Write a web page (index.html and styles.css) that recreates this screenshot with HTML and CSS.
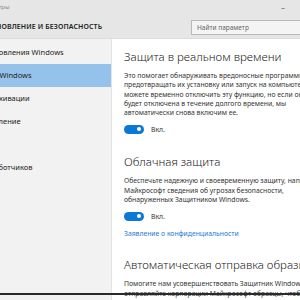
FILE: index.html
```html
<!DOCTYPE html>
<html lang="ru">
<head>
  <meta charset="UTF-8" />
  <title>Параметры</title>
  <link rel="stylesheet" href="styles.css">
</head>
<body>
  <div class="window">
    <div class="titlebar">
      <span class="app-name">Параметры</span>
      <span class="min-btn">&ndash;</span>
    </div>

    <div class="header">
      <div class="page-title">ОБНОВЛЕНИЕ И БЕЗОПАСНОСТЬ</div>
      <div class="search">Найти параметр</div>
    </div>

    <div class="main">
      <!-- Меню слева -->
      <ul class="sidebar">
        <li>Центр обновления Windows</li>
        <li class="active">Защитник Windows</li>
        <li>Служба архивации</li>
        <li>Восстановление</li>
        <li>Активация</li>
        <li>Для разработчиков</li>
      </ul>

      <div class="content">
        <h2>Защита в реальном времени</h2>
        <p>Это помогает обнаруживать вредоносные программы и<br>
          предотвращать их установку или запуск на компьютере. Вы<br>
          можете временно отключить эту функцию, но если она<br>
          будет отключена в течение долгого времени, мы<br>
          автоматически снова включим ее.</p>
        <div class="toggle-row"><span class="toggle"></span>Вкл.</div>

        <h2>Облачная защита</h2>
        <p>Обеспечьте надежную и своевременную защиту, направляя в<br>
          Майкрософт сведения об угрозах безопасности,<br>
          обнаруженных Защитником Windows.</p>
        <div class="toggle-row"><span class="toggle"></span>Вкл.</div>
        <a class="link" href="#">Заявление о конфиденциальности</a>

        <h2>Автоматическая отправка образцов</h2>
        <p>Помогите нам усовершенствовать Защитник Windows,<br>
          отправляйте корпорации Майкрософт образцы, чтобы мы</p>
      </div>
    </div>
  </div>
  <div class="taskbar-edge"></div>
</body>
</html>
```

FILE: styles.css
```css
body {
  margin: 0;
  width: 300px;
  height: 300px;
  overflow: hidden;
  position: relative;
  font-family: "Noto Sans", "Open Sans", sans-serif;
  background: #fff;
}
.window {
  margin-left: -40px;
  width: 340px;
}
.titlebar {
  height: 14px;
  background: #e6e6e6;
  display: flex;
  align-items: center;
  justify-content: space-between;
  padding: 0 15px 0 16px;
  font-size: 6px;
  color: #888;
}
.min-btn {
  font-size: 8px;
  color: #777;
}
.header {
  height: 24px;
  background: #e6e6e6;
  border-bottom: 1px solid #dcdcdc;
  display: flex;
  align-items: center;
  justify-content: space-between;
  padding-left: 26px;
}
.page-title {
  font-size: 7px;
  font-weight: 600;
  color: #222;
  letter-spacing: 0.1px;
}
.search {
  width: 107px;
  height: 13px;
  margin-right: -5px;
  margin-top: 2px;
  background: #f4f4f4;
  border: 1px solid #b9b9b9;
  font-size: 6.5px;
  color: #666;
  padding-left: 5px;
  line-height: 13px;
}
.main {
  display: flex;
  height: 262px;
}
.sidebar {
  list-style: none;
  margin: 0;
  padding: 2px 0 0;
  width: 151px;
  flex-shrink: 0;
  background: #f2f2f2;
  border-right: 1px solid #e4e4e4;
}
.sidebar li {
  height: 23px;
  line-height: 23px;
  padding-left: 1px;
  font-size: 7.5px;
  color: #222;
  white-space: nowrap;
}
.sidebar li.active {
  background: #94c2ea;
}
.content {
  flex: 1;
  padding: 10px 0 0 12px;
  color: #333;
  white-space: nowrap;
}
.content h2 {
  margin: 0;
  font-size: 11.5px;
  font-weight: 300;
  color: #222;
  line-height: 16px;
}
.content p {
  margin: 6px 0 7px;
  font-size: 6.8px;
  line-height: 9.3px;
  color: #333;
}
.toggle-row {
  display: flex;
  align-items: center;
  font-size: 6.8px;
  color: #333;
  height: 10px;
  margin-bottom: 20px;
}
.toggle {
  width: 20px;
  height: 9px;
  border-radius: 5px;
  background: #0a78d7;
  position: relative;
  margin-right: 7px;
}
.toggle::after {
  content: "";
  position: absolute;
  right: 3px;
  top: 2.5px;
  width: 4px;
  height: 4px;
  border-radius: 50%;
  background: #fff;
}
.link {
  display: block;
  font-size: 6.8px;
  color: #1a7ad4;
  text-decoration: none;
  margin: -12px 0 19px;
}
.taskbar-edge {
  position: absolute;
  left: 0;
  right: 0;
  top: 293px;
  height: 2px;
  background: #2a2a2a;
}
```
